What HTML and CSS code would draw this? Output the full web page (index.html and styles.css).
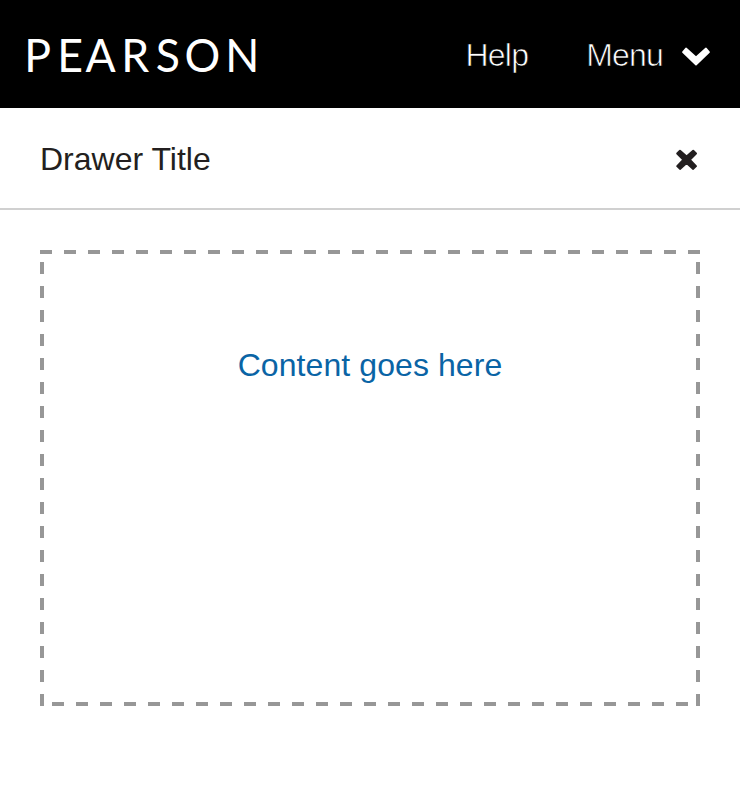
FILE: index.html
```
<!DOCTYPE html>
<html lang="en">
<head>
<meta charset="utf-8">
<title>Pearson</title>
<link rel="stylesheet" href="styles.css">
</head>
<body>
<header class="topbar">
  <svg class="logo" width="240" height="60" viewBox="0 0 240 60" role="img" aria-label="Pearson">
    <text y="48.5" x="0.4 34.9 64.8 102.3 138.8 169 211.8" transform="scale(.95 1)">PEARSON</text>
  </svg>
  <nav class="nav">
    <a class="help">Help</a>
    <a class="menu">Menu
      <svg class="chevron" width="30" height="22" viewBox="0 0 30 22"><path d="M5 2.5 15 11.5 25 2.5 28 6 15 18.5 2 6Z"/></svg>
    </a>
  </nav>
</header>
<section class="drawer">
  <div class="drawer-header">
    <h1 class="title">Drawer Title</h1>
    <svg class="close" width="24" height="22" viewBox="0 0 24 22"><path d="M5 1.7 11.6 7.6 18.2 1.7 21 4.5 14.8 10.8 21 17.1 18.2 19.9 11.6 14 5 19.9 2.2 17.1 8.4 10.8 2.2 4.5Z"/></svg>
  </div>
  <div class="drawer-body">
    <div class="placeholder"><span class="message">Content goes here</span></div>
  </div>
</section>
</body>
</html>
```

FILE: styles.css
```
* { box-sizing: border-box; }
body {
  margin: 0;
  background: #fff;
  font-family: "Liberation Sans", Arial, sans-serif;
  font-size: 32px;
  line-height: 40px;
}
.topbar {
  display: flex;
  align-items: center;
  justify-content: space-between;
  height: 108px;
  padding: 0 29px 0 24px;
  background: #000;
  color: #fff;
}
.logo text {
  font: 400 47px Lato, sans-serif;
  fill: #fff;
}
.nav {
  display: flex;
  gap: 58px;
  padding-top: 2px;
  -webkit-text-stroke: 0.7px #000;
}
.help { letter-spacing: -0.8px; }
.menu {
  display: flex;
  align-items: center;
  letter-spacing: -0.8px;
}
.chevron {
  margin: 4px 0 0 18px;
  fill: #fff;
  stroke: #fff;
  stroke-width: 1.8;
  stroke-linejoin: round;
}
.drawer-header {
  display: flex;
  align-items: center;
  justify-content: space-between;
  height: 102px;
  padding: 2px 41px 0 40px;
  border-bottom: 2px solid #d0d0d0;
}
.title {
  margin: 0;
  font-size: 32px;
  font-weight: 400;
  color: #231f20;
}
.close {
  margin-top: 1px;
  fill: #231f20;
  stroke: #231f20;
  stroke-width: 2;
  stroke-linejoin: round;
}
.drawer-body { padding: 40px; }
.placeholder {
  --dash: #979797 0 12px, transparent 12px 24px;
  height: 456px;
  padding-top: 95px;
  text-align: center;
  color: #0a64a5;
  background:
    repeating-linear-gradient(to right, var(--dash)) 0 0 / 100% 4px no-repeat,
    repeating-linear-gradient(to right, transparent 0 12px, #979797 12px 24px) 0 100% / 648px 4px no-repeat,
    repeating-linear-gradient(to bottom, var(--dash)) 0 12px / 4px 444px no-repeat,
    repeating-linear-gradient(to bottom, var(--dash)) 100% 12px / 4px 444px no-repeat;
}
.message { letter-spacing: 0.08px; }
```
